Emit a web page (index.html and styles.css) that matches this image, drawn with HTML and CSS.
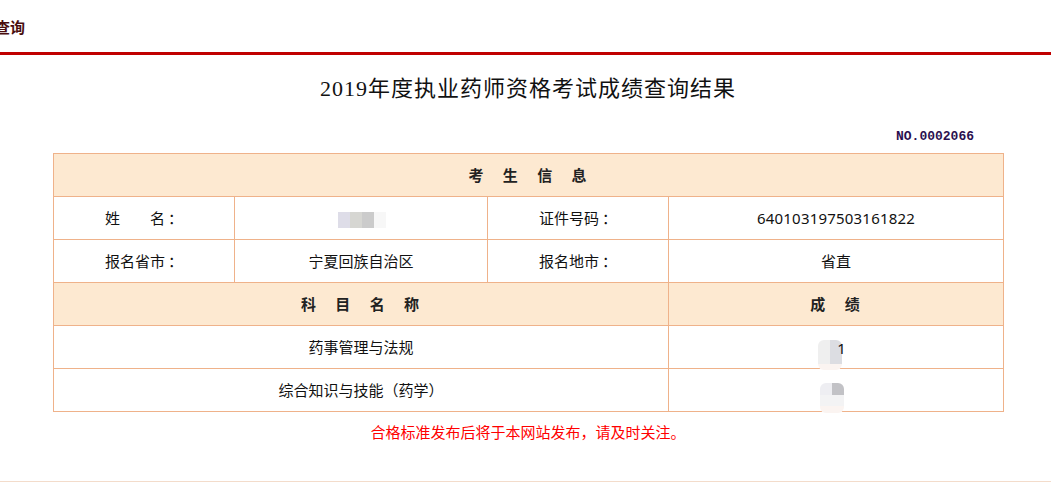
FILE: index.html
```html
<!DOCTYPE html>
<html lang="zh-CN">
<head>
<meta charset="utf-8">
<title>成绩查询</title>
<link rel="stylesheet" href="styles.css">
</head>
<body>
<div class="topbar"><span class="topbar-title">查询</span></div>
<h1 class="title"><span class="title-num">2019</span>年度执业药师资格考试成绩查询结果</h1>
<div class="wrap">
  <div class="serial">NO.0002066</div>
  <table class="score-table">
    <colgroup>
      <col class="c1"><col class="c2"><col class="c3"><col class="c4">
    </colgroup>
    <tr class="head">
      <td colspan="4"><span class="spaced">考 生 信 息</span></td>
    </tr>
    <tr>
      <td>姓<span class="gap"></span>名<span class="colon">：</span></td>
      <td><span class="blur-name"><i class="b1"></i><i class="b2"></i><i class="b3"></i><i class="b4"></i></span></td>
      <td>证件号码<span class="colon">：</span></td>
      <td class="num">640103197503161822</td>
    </tr>
    <tr>
      <td>报名省市<span class="colon">：</span></td>
      <td>宁夏回族自治区</td>
      <td>报名地市<span class="colon">：</span></td>
      <td>省直</td>
    </tr>
    <tr class="head">
      <td colspan="3"><span class="spaced">科 目 名 称</span></td>
      <td><span class="spaced">成 绩</span></td>
    </tr>
    <tr>
      <td colspan="3">药事管理与法规</td>
      <td><span class="score"><span class="blob blob-a"></span><span class="score-digit">1</span></span></td>
    </tr>
    <tr>
      <td colspan="3">综合知识与技能（药学）</td>
      <td><span class="score"><span class="blob blob-b"></span></span></td>
    </tr>
  </table>
  <p class="notice">合格标准发布后将于本网站发布，请及时关注。</p>
</div>
<div class="footer-line"></div>
</body>
</html>
```

FILE: styles.css
```css
html, body {
  margin: 0;
  padding: 0;
  background: #ffffff;
  overflow: hidden;
}
body {
  font-family: "Noto Sans CJK SC", "Noto Sans", sans-serif;
  color: #111111;
  width: 1051px;
  height: 483px;
}
.topbar {
  height: 52px;
  border-bottom: 3px solid #c00000;
  display: flex;
  align-items: center;
  overflow: hidden;
}
.topbar-title {
  margin-left: -5px;
  margin-top: 1px;
  font-size: 15px;
  font-weight: bold;
  color: #4a0e0e;
  line-height: 20px;
}
.title {
  margin: 22px 0 0 0;
  padding-left: 5px;
  text-align: center;
  font-family: "Liberation Serif", "Noto Sans CJK SC", serif;
  font-size: 22px;
  font-weight: normal;
  letter-spacing: 1px;
  line-height: 24px;
  color: #111111;
}
.title-num {
  font-family: "Liberation Serif", serif;
}
.wrap {
  width: 950px;
  margin-left: 53px;
}
.serial {
  margin-top: 28px;
  padding-right: 29px;
  text-align: right;
  font-family: "Liberation Mono", monospace;
  font-size: 13px;
  font-weight: bold;
  line-height: 16px;
  height: 16px;
  color: #2a1050;
}
.score-table {
  margin-top: 8px;
  width: 950px;
  table-layout: fixed;
  border-collapse: collapse;
  font-size: 15px;
}
.c1 { width: 181px; }
.c2 { width: 253px; }
.c3 { width: 181px; }
.c4 { width: 335px; }
.score-table td {
  border: 1px solid #efb28a;
  height: 42px;
  padding: 0;
  text-align: center;
  vertical-align: middle;
  line-height: 20px;
  color: #111111;
}
.score-table .head td {
  background: #fde9d1;
  font-weight: bold;
  color: #222222;
}
.spaced {
  word-spacing: 12px;
  letter-spacing: 2px;
}
.gap {
  display: inline-block;
  width: 30px;
}
.colon {
  display: inline-block;
  width: 15px;
  text-align: center;
  margin-left: 3px;
}
.num {
  font-family: "Noto Sans", sans-serif;
  letter-spacing: 0.2px;
}
.blur-name {
  display: inline-flex;
  vertical-align: middle;
  margin-left: 2px;
}
.blur-name i {
  display: block;
  width: 12px;
  height: 16px;
}
.blur-name .b1 { background: #dedde8; }
.blur-name .b2 { background: #d6d6d2; }
.blur-name .b3 { background: #cbcbcb; }
.blur-name .b4 { background: #f7f7f7; }
.score {
  display: inline-flex;
  align-items: center;
  height: 20px;
  vertical-align: middle;
  padding-right: 8px;
}
.blob {
  display: block;
  width: 24px;
  height: 30px;
  margin-top: 14px;
  border-radius: 6px;
  filter: blur(0.6px);
}
.blob-a {
  background:
    linear-gradient(to right, #efefef 0 50%, #dcdde2 50% 100%) top / 100% 24px no-repeat,
    #fbf4f1;
}
.blob-b {
  background:
    linear-gradient(to right, #eeeef2 0 50%, #c2c2c6 50% 100%) top / 100% 12px no-repeat,
    linear-gradient(#f3f3f4, #f3f3f4) 0 12px / 100% 11px no-repeat,
    #fbf4f1;
}
.score-digit {
  position: relative;
  z-index: 1;
  margin-left: -5px;
  font-family: "Noto Sans", sans-serif;
  color: #111111;
}
.notice {
  margin: 10px 0 0 0;
  text-align: center;
  color: #ff0000;
  font-size: 15px;
  line-height: 20px;
}
.footer-line {
  margin-top: 39px;
  height: 0;
  border-top: 1px solid #f3dccb;
}
```
